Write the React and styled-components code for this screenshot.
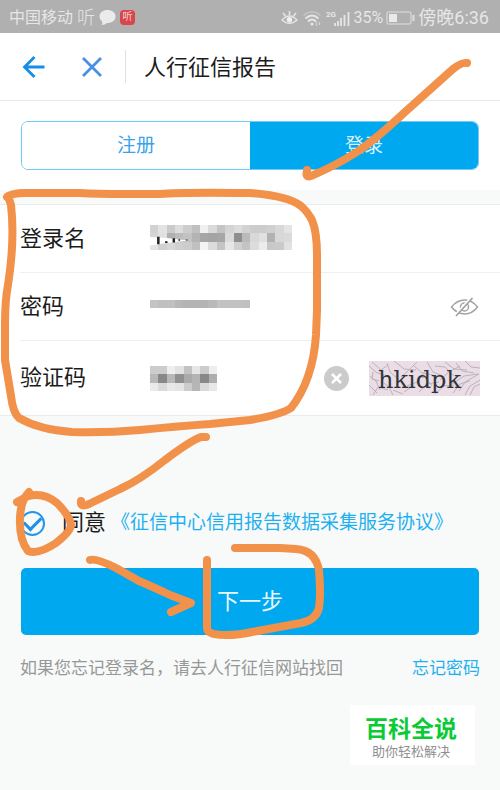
import React from "react";
import styled, { createGlobalStyle } from "styled-components";

const GlobalStyle = createGlobalStyle`
  * {
    box-sizing: border-box;
  }
  body {
    margin: 0;
    background: #f8faf9;
    font-family: Roboto, "Noto Sans CJK SC", sans-serif;
    color: #1c1c1c;
  }
  button, input {
    font-family: inherit;
  }
`;

const Page = styled.div`
  position: relative;
  overflow-x: hidden;
  padding-bottom: 24px;
`;

const StatusBar = styled.div`
  display: flex;
  justify-content: space-between;
  align-items: center;
  height: 33px;
  padding: 2px 11px 0 9px;
  background: #b0b0b0;
  color: #e6e6e6;
`;

const StatusGroup = styled.div`
  display: flex;
  align-items: center;
  gap: ${props => props.$gap || 4}px;
`;

const StatusText = styled.span`
  font-size: ${props => props.$size || 17}px;
  line-height: 24px;
  font-weight: ${props => (props.$light ? 300 : 400)};
`;

const Badge = styled.span`
  width: 15px;
  height: 15px;
  border-radius: 4px;
  background: #d9464b;
  color: #f6d5d5;
  font-size: 10px;
  line-height: 14px;
  text-align: center;
`;

const Header = styled.header`
  display: flex;
  align-items: center;
  height: 68px;
  padding: 0 20px;
  background: #fff;
  border-bottom: 1px solid #e9eaea;
`;

const IconButton = styled.button`
  display: flex;
  padding: 0;
  border: none;
  background: none;
  margin-right: ${props => props.$right || 0}px;
  cursor: pointer;
`;

const Divider = styled.span`
  width: 1px;
  height: 33px;
  margin-right: 18px;
  background: #dfe0e0;
`;

const Title = styled.h1`
  margin: 0;
  padding-top: 2px;
  font-size: 22px;
  line-height: 32px;
  font-weight: 400;
`;

const TabPanel = styled.div`
  padding: 20px 21px;
  background: #fff;
`;

const Tabs = styled.div`
  display: flex;
  height: 49px;
  border: 1px solid #6fcbf3;
  border-radius: 7px;
  overflow: hidden;
`;

const Tab = styled.button`
  flex: 1;
  padding: 0 0 5px;
  border: none;
  background: ${props => (props.$active ? "#00a8ef" : "#fff")};
  color: ${props => (props.$active ? "#d9f2fd" : "#3aa3ea")};
  font-size: 19px;
  cursor: pointer;
`;

const Form = styled.form`
  margin: 0;
`;

const Fields = styled.div`
  margin-top: 14px;
  padding-left: 20px;
  background: #fff;
  border-top: 1px solid #e9ecec;
  border-bottom: 1px solid #e9ecec;
`;

const Row = styled.div`
  display: flex;
  align-items: center;
  height: ${props => props.$height || 68}px;
  padding-right: 20px;
  & + & {
    border-top: 1px solid #efefef;
  }
`;

const Label = styled.label`
  width: 130px;
  flex: none;
  font-size: 22px;
  line-height: 32px;
`;

const Field = styled.div`
  position: relative;
  display: flex;
  align-items: center;
  flex: 1;
  min-width: 0;
  height: 40px;
  padding-bottom: ${props => props.$lift || 0}px;
`;

const Input = styled.input`
  width: 100%;
  height: 32px;
  padding: 0;
  border: none;
  outline: none;
  background: transparent;
  font-size: 20px;
`;

const MosaicSvg = styled.svg`
  position: absolute;
  left: 0;
`;

const Captcha = styled.svg`
  flex: none;
  margin-left: 20px;
`;

const Agreement = styled.div`
  display: flex;
  align-items: center;
  gap: 5px;
  height: 40px;
  margin: 87px 20px 0;
`;

const CheckLabel = styled.label`
  display: flex;
  align-items: center;
  gap: 17px;
  font-size: 22px;
  line-height: 32px;
`;

const Check = styled.input`
  appearance: none;
  width: 25px;
  height: 25px;
  margin: 0;
  border: 2px solid #2196ec;
  border-radius: 50%;
  display: grid;
  place-items: center;
  &:checked::after {
    content: "";
    width: 14px;
    height: 8px;
    margin-bottom: 4px;
    border-left: 3px solid #2090ea;
    border-bottom: 3px solid #2090ea;
    transform: rotate(-45deg);
  }
`;

const BlueLink = styled.a`
  color: #1fb0f0;
  font-size: ${props => props.$size}px;
  line-height: 28px;
  text-decoration: none;
  white-space: nowrap;
`;

const Submit = styled.button`
  display: block;
  width: calc(100% - 42px);
  height: 67px;
  margin: 25px 21px 0;
  padding: 0 0 6px;
  border: none;
  border-radius: 5px;
  background: #00a8ef;
  color: #eaf8fe;
  font-size: 22px;
  cursor: pointer;
`;

const Help = styled.div`
  display: flex;
  justify-content: space-between;
  align-items: center;
  margin: 19px 20px 0;
`;

const HelpText = styled.span`
  color: #969897;
  font-size: 17px;
  line-height: 28px;
`;

const Brand = styled.div`
  width: 125px;
  height: 60px;
  margin: 23px 25px 0 auto;
  padding: 11px 3px 0 0;
  background: #fff;
  text-align: center;
`;

const BrandName = styled.div`
  color: #0acb36;
  font-size: 23px;
  line-height: 28px;
  font-weight: 700;
`;

const BrandText = styled.div`
  color: #8f8f8f;
  font-size: 13px;
  line-height: 16px;
`;

const Marks = styled.svg`
  position: absolute;
  top: 0;
  left: 0;
  pointer-events: none;
`;

const nameCells = [
  "d2 e3 cb dd cd c0 f0 da c4 d4 dc d2 cc cc d0 d8 e4",
  "d6 e0 b0 bc c2 b4 a6 a4 a6 da 8e ba d8 e0 b2 d8 da",
  "e4 d2 d8 d0 cc c0 f4 dc c4 e6 d0 c4 dc ec c8 ca e2"
];

const passwordCells = ["c4 c0 c0 b8 b4 b4 b4 b8 c2 c2 c2 c0"];

const codeCells = [
  "cc cc ee e2 c2 e6 cc ee",
  "b8 88 b8 90 aa b4 88 ae",
  "ea da e8 e4 cc b6 da e8"
];

function Mosaic({ rows, children }) {
  const cols = rows[0].split(" ").length;
  const width = Math.round((cols * 25) / 3);
  const height = Math.round((rows.length * 25) / 3);
  return (
    <MosaicSvg
      width={width}
      height={height}
      viewBox={`0 0 ${cols} ${rows.length}`}
      preserveAspectRatio="none"
      aria-hidden="true"
    >
      <g shapeRendering="crispEdges">
        {rows.map((row, y) =>
          row
            .split(" ")
            .map((c, x) => (
              <rect key={x + "-" + y} x={x} y={y} width="1" height="1" fill={`#${c}${c}${c}`} />
            ))
        )}
      </g>
      {children}
    </MosaicSvg>
  );
}

function StatusIcons() {
  return (
    <svg width="70" height="22" viewBox="0 0 70 22" fill="none" stroke="#e6e6e6">
      <path d="M1 13Q8.500 5 16 13Q8.500 20 1 13Z" strokeWidth="1.500" />
      <circle cx="8.500" cy="12.800" r="2.700" fill="#f0f0f0" stroke="none" />
      <path d="M8.500 8V4M4.500 9L2 6M12.500 9L15 6" strokeWidth="1.600" />
      <path d="M22.500 8.500Q31 1 39.500 8.500" strokeWidth="1.500" opacity="0.400" />
      <path d="M24.500 11.500Q31 5.500 37.500 11.500M27 14.500Q31 10.500 35 14.500" strokeWidth="1.900" />
      <circle cx="31" cy="17" r="1.600" fill="#e6e6e6" stroke="none" />
      <path d="M35.500 15v4M38.500 15v3" strokeWidth="1.300" opacity="0.700" />
      <path d="M54 19v-3M57 19v-5M60 19v-8M63.500 19v-11M67.500 19v-14" strokeWidth="1.800" />
      <text x="45" y="10" fontSize="8" fontWeight="700" fontFamily="Roboto, sans-serif" fill="#e6e6e6" stroke="none">2G</text>
    </svg>
  );
}

function CaptchaImage() {
  return (
    <Captcha width="111" height="35" viewBox="0 0 111 35" role="img" aria-label="hkidpk">
      <rect width="111" height="35" fill="#eaddE6" />
      <g fill="none" stroke="#a59ca5" strokeWidth="1" opacity="0.650">
        <path d="M0 5l8 7 5 1M3 1l9 8 7-5M1 15l6 5 4 9M0 24l8 8M12 20l8 6 4 8M18 2l3 9 7 6M25 0l10 8 12 1M32 16l8-7 8-8M38 25l10-4 8-11" />
        <path d="M44 4l9 8 11 2M50 31l8-8 12-2M58 1l6 10 10 4M66 5l10 1 9 9M71 19l9-8 11-6M76 1l9 7 13 1M87 2l6 8 12 2M96 0l6 6 9 1" />
        <path d="M84 32l7-9 10-3M90 30l6-9 14-8M96 34l5-9 10-6M101 34l4-8 6-3M83 23l12-8 14-2M66 33l9-8 10-1M24 29l10 4M35 31l10-7M4 34l5-8 10 3M4 11l-1 7 7 2M15 13l-2 9M50 16l7 1 6 8" />
      </g>
      <text x="9" y="27" fontFamily="DejaVu Serif, serif" fontSize="24" fill="#30343a">hkidpk</text>
    </Captcha>
  );
}

function HandMarks() {
  return (
    <Marks
      width="500"
      height="790"
      viewBox="0 0 500 790"
      fill="none"
      stroke="#f29149"
      strokeWidth="8"
      strokeLinecap="round"
      strokeLinejoin="round"
      aria-hidden="true"
    >
      <path d="M467 63Q462 62 453 69L405 112Q376 139 357 152Q335 166 311 176Q305 178 307 171L307 170" />
      <path d="M7 197Q12 193 25 193H80Q96 194 125 194H160Q180 192 250 193Q288 196 301 206Q307 211 312 220Q317 232 317 255V310L316 335Q313 380 291 408Q280 415 250 420L210 424Q180 426 140 430Q105 433 72 432Q40 430 19 418Q13 413 11 396L5 360V325Q5 300 8 285Q15 240 11 205L8 196" />
      <path d="M206 437H201Q190 441 165 460Q140 480 120 489L89 504Q80 508 81 501" />
      <path d="M17 502L28 496Q44 492 57 503Q70 516 71 525Q71 531 56 543Q38 555 28 551Q19 540 20 517Q21 500 29 492" />
      <path d="M90 560Q96 558 116 568L139 581Q151 586 170 595L191 603L171 612" />
      <path d="M207 560V628Q207 635 225 635Q240 635 252 632L301 623Q316 620 319 608Q321 595 319 570Q315 550 296 549L280 548H235" />
    </Marks>
  );
}

export default function App() {
  return (
    <Page>
      <GlobalStyle />
      <StatusBar>
        <StatusGroup>
          <StatusText $size={16}>中国移动</StatusText>
          <StatusText $size={18} $light>听</StatusText>
          <svg width="17" height="17" viewBox="0 0 17 17" fill="#ebebeb">
            <path d="M8.500 1C13 1 16.500 3.500 16.500 7.500S13 14 8 14Q6 16 2.500 16Q4 14.500 3 12.500Q.5 10.500 .5 7.500C.5 3.500 4 1 8.500 1Z" />
          </svg>
          <Badge>听</Badge>
        </StatusGroup>
        <StatusGroup $gap={3}>
          <StatusIcons />
          <StatusText $size={16}>35%</StatusText>
          <svg width="29" height="14" viewBox="0 0 29 14" fill="none">
            <rect x="1" y="1" width="24" height="12" rx="2" stroke="#cfcfcf" strokeWidth="1.500" />
            <rect x="3" y="3" width="8" height="8" fill="#e9e9e9" />
            <path d="M27.500 4v6" stroke="#e0e0e0" strokeWidth="2" />
          </svg>
          <StatusText $size={18}>傍晚6:36</StatusText>
        </StatusGroup>
      </StatusBar>

      <Header>
        <IconButton aria-label="返回" $right={34}>
          <svg width="26" height="26" viewBox="0 0 26 26" fill="none" stroke="#168de9" strokeWidth="2.800">
            <path d="M24.500 13H5M14.500 3L4.500 13L14.500 23" />
          </svg>
        </IconButton>
        <IconButton aria-label="关闭" $right={21}>
          <svg width="24" height="26" viewBox="0 0 24 26" fill="none" stroke="#4a90e2" strokeWidth="2.800">
            <path d="M3 4L21 22M21 4L3 22" />
          </svg>
        </IconButton>
        <Divider />
        <Title>人行征信报告</Title>
      </Header>

      <TabPanel>
        <Tabs>
          <Tab type="button">注册</Tab>
          <Tab type="button" $active>登录</Tab>
        </Tabs>
      </TabPanel>

      <Form onSubmit={event => event.preventDefault()}>
        <Fields>
          <Row $height={67}>
            <Label htmlFor="name">登录名</Label>
            <Field $lift={2}>
              <Input id="name" type="text" />
              <Mosaic rows={nameCells}>
                <path d="M0 1.450L2 1.550L4.600 1.850L2 2.150L0 2.450Z" fill="#fff" />
                <path d="M.85 1.400h.3v.9h-.3zM1.800 1.950h.3v.2h-.3zM2.700 1.600h.3v.5h-.3zM3.400 1.700h.2v.2h-.2zM4.300 1.750h.2v.1h-.2z" fill="#222" />
              </Mosaic>
            </Field>
          </Row>
          <Row>
            <Label htmlFor="password">密码</Label>
            <Field $lift={6}>
              <Input id="password" type="password" />
              <Mosaic rows={passwordCells} />
            </Field>
            <IconButton type="button" aria-label="显示密码">
              <svg width="30" height="24" viewBox="0 0 30 24" fill="none" stroke="#a3a3a3" strokeWidth="1.500">
                <path d="M1.500 12Q7 5 15 5Q22 5 27.500 12Q22 19 15 19Q7 19 1.500 12Z" />
                <circle cx="14.500" cy="12" r="4" />
                <path d="M20.500 3L4.500 21" stroke="#fff" strokeWidth="2" />
                <path d="M22.500 3L6 21" strokeWidth="1.800" />
              </svg>
            </IconButton>
          </Row>
          <Row $height={75}>
            <Label htmlFor="code">验证码</Label>
            <Field>
              <Input id="code" type="text" />
              <Mosaic rows={codeCells} />
            </Field>
            <IconButton type="button" aria-label="清除">
              <svg width="25" height="25" viewBox="0 0 25 25">
                <circle cx="12.500" cy="12.500" r="12.500" fill="#cbcbcb" />
                <path d="M8 8l9 9M17 8l-9 9" stroke="#fff" strokeWidth="2.500" />
              </svg>
            </IconButton>
            <CaptchaImage />
          </Row>
        </Fields>

        <Agreement>
          <CheckLabel>
            <Check type="checkbox" defaultChecked />
            同意
          </CheckLabel>
          <BlueLink href="#agreement" $size={19}>《征信中心信用报告数据采集服务协议》</BlueLink>
        </Agreement>
        <Submit type="submit">下一步</Submit>
      </Form>

      <Help>
        <HelpText>如果您忘记登录名，请去人行征信网站找回</HelpText>
        <BlueLink href="#forgot" $size={17}>忘记密码</BlueLink>
      </Help>

      <Brand>
        <BrandName>百科全说</BrandName>
        <BrandText>助你轻松解决</BrandText>
      </Brand>
      <HandMarks />
    </Page>
  );
}
